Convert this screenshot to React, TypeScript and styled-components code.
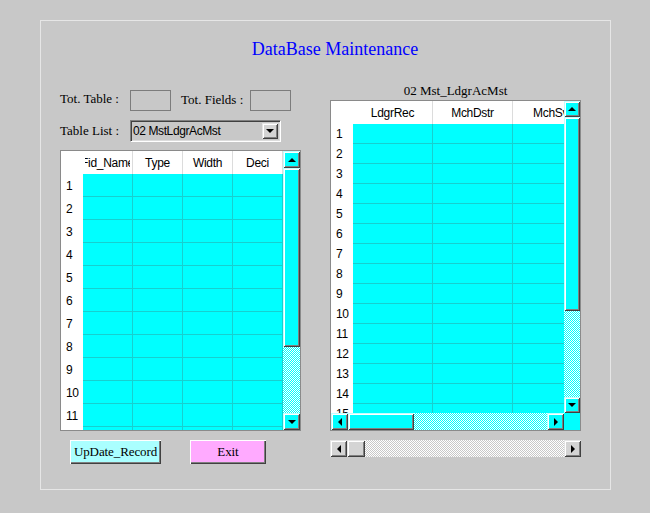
import React from 'react';
import styled, { createGlobalStyle, css } from 'styled-components';

const GlobalStyle = createGlobalStyle`
  html, body { margin: 0; padding: 0; background: #c8c8c8; }
  body { font-family: "Liberation Serif", "Times New Roman", serif; color: #000; }
`;

const SANS = `"Liberation Sans", Tahoma, Arial, sans-serif`;

type Tone = 'cyan' | 'gray';
const tones = {
  cyan: { face: '#00ffff', light: '#ffffff', outerLight: '#c0ffff', dark: '#404040', track: '#00ffff' },
  gray: { face: '#d4d4d4', light: '#ffffff', outerLight: '#e4e4e4', dark: '#404040', track: '#c8c8c8' },
};

const raised = (tone: Tone) => css`
  background: ${tones[tone].face};
  box-shadow: inset 1px 1px ${tones[tone].outerLight}, inset -1px -1px ${tones[tone].dark},
    inset 2px 2px ${tones[tone].light}, inset -2px -2px #808080;
`;

const Page = styled.div`
  width: 650px;
  height: 513px;
  box-sizing: border-box;
  padding: 20px 0 0 40px;
  background: #c8c8c8;
`;

const Panel = styled.div`
  width: 571px;
  height: 470px;
  box-sizing: border-box;
  border: 1px solid #e6e6e6;
`;

const Title = styled.div`
  margin-top: 18px;
  padding-left: 19px;
  text-align: center;
  font-size: 18px;
  line-height: 21px;
  color: #0000ff;
`;

const Body = styled.div`
  display: grid;
  grid-template-columns: 241px 251px;
  column-gap: 29px;
  margin-top: 23px;
  padding-left: 19px;
  align-items: start;
`;

const Column = styled.div<{ $top?: number }>`
  display: flex;
  flex-direction: column;
  padding-top: ${p => p.$top ?? 0}px;
`;

const FieldRow = styled.div<{ $h: number; $mt?: number }>`
  display: flex;
  align-items: center;
  height: ${p => p.$h}px;
  margin-top: ${p => p.$mt ?? 0}px;
`;

const Label = styled.span<{ $w: number; $ml?: number; $lift?: number }>`
  width: ${p => p.$w}px;
  margin-left: ${p => p.$ml ?? 0}px;
  padding-bottom: ${p => p.$lift ?? 0}px;
  font-size: 13px;
  line-height: 16px;
  white-space: nowrap;
`;

const ReadBox = styled.div`
  width: 41px;
  height: 21px;
  box-sizing: border-box;
  border: 1px solid #7c7c7c;
`;

const Combo = styled.div`
  width: 151px;
  height: 22px;
  box-sizing: border-box;
  border: 1px solid;
  border-color: #808080 #ffffff #ffffff #808080;
  box-shadow: inset 1px 1px #404040, inset -1px -1px #dcdcdc;
  display: flex;
  align-items: center;
  justify-content: space-between;
  padding: 0 2px 0 2px;
  font-family: ${SANS};
  font-size: 12px;
  letter-spacing: -0.4px;
`;

const DropBtn = styled.div`
  width: 16px;
  height: 16px;
  display: flex;
  align-items: center;
  justify-content: center;
  ${raised('gray')}
`;

type Dir = 'up' | 'down' | 'left' | 'right';
const Arrow = styled.span<{ $dir: Dir }>`
  width: 0;
  height: 0;
  border: 4px solid transparent;
  ${p => p.$dir === 'up' && css`border-top-width: 0; border-bottom-color: #000;`}
  ${p => p.$dir === 'down' && css`border-bottom-width: 0; border-top-color: #000;`}
  ${p => p.$dir === 'left' && css`border-left-width: 0; border-right-color: #000;`}
  ${p => p.$dir === 'right' && css`border-right-width: 0; border-left-color: #000;`}
`;

/* ---------- scrollbars ---------- */
const Bar = styled.div<{ $vertical: boolean; $thick: number; $len?: number }>`
  display: flex;
  flex: none;
  flex-direction: ${p => (p.$vertical ? 'column' : 'row')};
  ${p => (p.$vertical ? css`width: ${p.$thick}px;` : css`height: ${p.$thick}px;`)}
  ${p => p.$len !== undefined && (p.$vertical ? css`height: ${p.$len}px;` : css`width: ${p.$len}px;`)}
`;

const BarBtn = styled.div<{ $tone: Tone; $size: number; $vertical: boolean }>`
  flex: none;
  ${p => (p.$vertical ? css`height: ${p.$size}px;` : css`width: ${p.$size}px;`)}
  display: flex;
  align-items: center;
  justify-content: center;
  ${p => raised(p.$tone)}
`;

const Thumb = styled.div<{ $tone: Tone; $size: number; $vertical: boolean }>`
  flex: none;
  ${p => (p.$vertical ? css`height: ${p.$size}px;` : css`width: ${p.$size}px;`)}
  ${p => raised(p.$tone)}
`;

const Track = styled.div`
  flex: 1;
  min-width: 0;
  min-height: 0;
  overflow: hidden;
  display: flex;
  svg {
    display: block;
    width: 100%;
    height: 100%;
  }
`;

function Dither({ tone }: { tone: Tone }) {
  const id = `dither-${tone}`;
  return (
    <Track>
      <svg shapeRendering="crispEdges">
        <defs>
          <pattern id={id} width="2" height="2" patternUnits="userSpaceOnUse">
            <rect width="2" height="2" fill={tones[tone].track} />
            <rect x="0" y="0" width="1" height="1" fill="#ffffff" />
            <rect x="1" y="1" width="1" height="1" fill="#ffffff" />
          </pattern>
        </defs>
        <rect width="100%" height="100%" fill={`url(#${id})`} />
      </svg>
    </Track>
  );
}

function ScrollBar(props: { vertical: boolean; tone: Tone; thick: number; len?: number; btn: number; thumb: number }) {
  const { vertical, tone, thick, len, btn, thumb } = props;
  return (
    <Bar $vertical={vertical} $thick={thick} $len={len}>
      <BarBtn $tone={tone} $size={btn} $vertical={vertical}>
        <Arrow $dir={vertical ? 'up' : 'left'} />
      </BarBtn>
      <Thumb $tone={tone} $size={thumb} $vertical={vertical} />
      <Dither tone={tone} />
      <BarBtn $tone={tone} $size={btn} $vertical={vertical}>
        <Arrow $dir={vertical ? 'down' : 'right'} />
      </BarBtn>
    </Bar>
  );
}

/* ---------- grid ---------- */
const Frame = styled.div<{ $w: number; $h: number; $mt?: number }>`
  width: ${p => p.$w}px;
  height: ${p => p.$h}px;
  margin-top: ${p => p.$mt ?? 0}px;
  box-sizing: border-box;
  border: 1px solid #8a8a8a;
  background: #ffffff;
  display: flex;
  flex-direction: column;
`;

const FrameMain = styled.div`
  display: flex;
  flex: 1;
  min-height: 0;
`;

const TableView = styled.div`
  flex: 1;
  min-width: 0;
  overflow: hidden;
`;

const Table = styled.div<{ $cols: string }>`
  display: grid;
  grid-template-columns: ${p => p.$cols};
  font-family: ${SANS};
  font-size: 12px;
  letter-spacing: -0.3px;
`;

const Corner = styled.div<{ $h: number }>`
  height: ${p => p.$h}px;
  background: #ffffff;
`;

const HeadCell = styled.div<{ $h: number }>`
  height: ${p => p.$h}px;
  box-sizing: border-box;
  background: #ffffff;
  border-right: 1px solid #dcdcdc;
  padding: 0 2px;
  display: flex;
  align-items: center;
`;

const HeadText = styled.div`
  width: 100%;
  overflow: hidden;
  display: flex;
  justify-content: center;
  white-space: nowrap;
`;

const RowHead = styled.div<{ $h: number }>`
  height: ${p => p.$h}px;
  background: #ffffff;
  padding-left: 5px;
  display: flex;
  align-items: center;
`;

const DataCell = styled.div<{ $h: number }>`
  height: ${p => p.$h}px;
  box-sizing: border-box;
  background: #00ffff;
  border-right: 1px solid #17cfcf;
  border-bottom: 1px solid #17cfcf;
`;

const HRow = styled.div`
  display: flex;
  height: 17px;
  flex: none;
`;

const CornerBox = styled.div`
  width: 16px;
  background: #00ffff;
`;

function DataTable(props: { headers: string[]; colW: number; rowH: number; rows: number }) {
  const { headers, colW, rowH, rows } = props;
  const cols = `22px repeat(${headers.length}, ${colW}px)`;
  return (
    <Table $cols={cols}>
      <Corner $h={23} />
      {headers.map(h => (
        <HeadCell key={h} $h={23}>
          <HeadText>
            <span>{h}</span>
          </HeadText>
        </HeadCell>
      ))}
      {Array.from({ length: rows }, (_, r) => (
        <React.Fragment key={r}>
          <RowHead $h={rowH}>{r + 1}</RowHead>
          {headers.map(h => (
            <DataCell key={h} $h={rowH} />
          ))}
        </React.Fragment>
      ))}
    </Table>
  );
}

/* ---------- buttons ---------- */
const ActionRow = styled.div`
  display: flex;
  gap: 29px;
  padding-left: 10px;
  margin-top: 9px;
`;

const ActionButton = styled.button<{ $w: number; $bg: string }>`
  width: ${p => p.$w}px;
  height: 24px;
  padding: 0;
  border: none;
  background: ${p => p.$bg};
  box-shadow: inset 1px 1px #ffffff, inset -1px -1px #404040, inset -2px -2px #808080;
  font-family: "Liberation Serif", "Times New Roman", serif;
  font-size: 13px;
  letter-spacing: -0.1px;
  white-space: nowrap;
  overflow: visible;
  color: #000;
  display: flex;
  align-items: center;
  justify-content: center;
`;

const Caption = styled.div`
  text-align: center;
  font-size: 13px;
  line-height: 16px;
`;

export default function App() {
  return (
    <>
      <GlobalStyle />
      <Page>
        <Panel>
          <Title>DataBase Maintenance</Title>
          <Body>
            <Column $top={7}>
              <FieldRow $h={21}>
                <Label $w={70} $lift={3}>Tot. Table :</Label>
                <ReadBox />
                <Label $w={69} $ml={10} $lift={1}>Tot. Fields :</Label>
                <ReadBox />
              </FieldRow>
              <FieldRow $h={22} $mt={9}>
                <Label $w={70}>Table List :</Label>
                <Combo>
                  <span>02 MstLdgrAcMst</span>
                  <DropBtn>
                    <Arrow $dir="down" />
                  </DropBtn>
                </Combo>
              </FieldRow>
              <Frame $w={241} $h={281} $mt={8}>
                <FrameMain>
                  <TableView>
                    <DataTable headers={['Fid_Name', 'Type', 'Width', 'Deci']} colW={50} rowH={23} rows={12} />
                  </TableView>
                  <ScrollBar vertical tone="cyan" thick={17} btn={17} thumb={179} />
                </FrameMain>
              </Frame>
              <ActionRow>
                <ActionButton $w={91} $bg="#aaffff">UpDate_Record</ActionButton>
                <ActionButton $w={76} $bg="#ffaaff">Exit</ActionButton>
              </ActionRow>
            </Column>
            <Column>
              <Caption>02 Mst_LdgrAcMst</Caption>
              <Frame $w={251} $h={331} $mt={1}>
                <FrameMain>
                  <TableView>
                    <DataTable headers={['LdgrRec', 'MchDstr', 'MchSvr']} colW={80} rowH={20} rows={15} />
                  </TableView>
                  <ScrollBar vertical tone="cyan" thick={16} btn={16} thumb={194} />
                </FrameMain>
                <HRow>
                  <ScrollBar vertical={false} tone="cyan" thick={17} len={233} btn={17} thumb={66} />
                  <CornerBox />
                </HRow>
              </Frame>
              <FieldRow $h={17} $mt={9}>
                <ScrollBar vertical={false} tone="gray" thick={17} len={251} btn={17} thumb={18} />
              </FieldRow>
            </Column>
          </Body>
        </Panel>
      </Page>
    </>
  );
}
